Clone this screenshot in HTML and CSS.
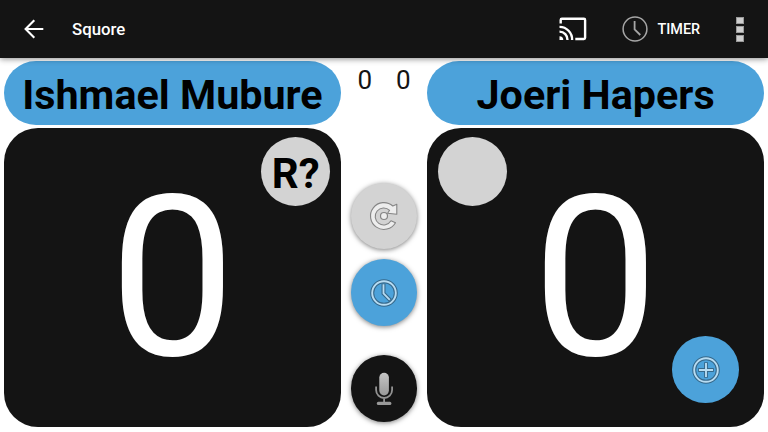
FILE: index.html
```html
<!DOCTYPE html>
<html lang="en">
<head>
<meta charset="utf-8">
<title>Squore</title>
<link rel="stylesheet" href="styles.css">
</head>
<body>
<header class="bar">
  <svg class="back" viewBox="0 0 20 20"><path d="M19.3 10H2M10.3 1.3L1.6 10l8.7 8.7" fill="none" stroke="#fff" stroke-width="2.1"/></svg>
  <h1 class="title">Squore</h1>
  <svg class="cast" viewBox="0 0 28 24" fill="none" stroke="#fff" stroke-width="2.4"><path d="M1.7 6.6V2.9q0-1.2 1.2-1.2h22q1.2 0 1.2 1.2v17.9q0 1.2-1.2 1.2h-8.6M.5 9.900A12.600 12.600 0 0 1 13.100 23M.5 14.600A8 8 0 0 1 8.500 23"/><path d="M.5 19.200A3.800 3.800 0 0 1 4.300 23H.5z" fill="#fff" stroke="none"/></svg>
  <svg class="clock" viewBox="0 0 26 26" fill="none" stroke="#a6a6a6"><circle cx="13" cy="13" r="11.900" stroke-width="1.500"/><path d="M12.600 5v8.300l5.700 5.700" stroke-width="1.800"/></svg>
  <span class="action">TIMER</span>
  <div class="more"><i></i><i></i><i></i></div>
</header>
<main class="board">
  <section class="side">
    <div class="name">Ishmael Mubure</div>
    <div class="score"><span class="digit">0</span><div class="serve right">R?</div></div>
  </section>
  <section class="middle">
    <div class="games"><span>0</span><span>0</span></div>
    <div class="fab gray">
      <svg viewBox="0 0 30 30" fill="none"><path d="M26.500 21.700A13.400 13.400 0 1 1 23.800 5L27.800 3.300V13.200L18.600 12.200L20.600 9.300A8.500 8.500 0 1 0 22 19.800Z" fill="#ededed" stroke="#858585" stroke-width="1.100" stroke-linejoin="round"/><circle cx="15" cy="15" r="3.500" fill="#ededed" stroke="#858585" stroke-width="1.200"/></svg>
    </div>
    <div class="fab blue time">
      <svg viewBox="0 0 30 30" fill="none"><circle cx="15" cy="15" r="11.800" stroke="#36688a" stroke-width="4"/><circle cx="15" cy="15" r="11.800" stroke="#b7dcf2" stroke-width="1.900"/><path d="M14.500 5.500v10l6.900 6.900" stroke="#36688a" stroke-width="4"/><path d="M14.500 6.300v9.200l6.300 6.300" stroke="#b7dcf2" stroke-width="1.800"/></svg>
    </div>
    <div class="fab black mic">
      <svg viewBox="0 0 30 36" fill="none"><defs><linearGradient id="m" x2="0" y2="1"><stop stop-color="#c6c6c6"/><stop offset="1" stop-color="#999"/></linearGradient></defs><rect x="10.300" y="1.800" width="9.600" height="22.600" rx="4.800" fill="url(#m)"/><path d="M7.100 15.500v3.500a8 8 0 0 0 16 0v-3.500M15.100 27v5" stroke="#929292" stroke-width="1.800"/><rect x="7.800" y="30.800" width="14.600" height="3.200" rx="1.500" fill="#999"/></svg>
    </div>
  </section>
  <section class="side">
    <div class="name">Joeri Hapers</div>
    <div class="score"><span class="digit">0</span><div class="serve left"></div>
      <div class="fab blue add">
        <svg viewBox="0 0 30 30" fill="none"><circle cx="15" cy="15" r="11.800" stroke="#36688a" stroke-width="4"/><circle cx="15" cy="15" r="11.800" stroke="#b7dcf2" stroke-width="1.900"/><path d="M15 7.200v15.600M7.200 15h15.600" stroke="#36688a" stroke-width="3.800"/><path d="M15 8v14M8 15h14" stroke="#b7dcf2" stroke-width="1.900"/></svg>
      </div>
    </div>
  </section>
</main>
</body>
</html>
```
FILE: styles.css
```css
* { box-sizing: border-box; }
body {
  margin: 0;
  width: 768px;
  height: 432px;
  overflow: hidden;
  background: #fff;
  font-family: Roboto, sans-serif;
  display: flex;
  flex-direction: column;
}
svg { display: block; flex: none; }
.bar {
  position: relative;
  z-index: 1;
  height: 57.5px;
  flex: none;
  display: flex;
  align-items: center;
  padding: 0 24px 0 24px;
  background: #141414;
  color: #fff;
  box-shadow: 0 1px 6px rgba(0, 0, 0, .45);
}
.back { width: 20px; height: 20px; }
.title {
  margin: 1px 0 0 28px;
  font-size: 16.800px;
  font-weight: 500;
  line-height: 20px;
}
.cast { width: 28px; height: 24px; margin-left: auto; }
.clock { width: 26px; height: 26px; margin-left: 35px; }
.action {
  width: 43.500px;
  margin: 2px 0 0 10px;
  font-size: 14.400px;
  font-weight: 500;
  line-height: 20px;
}
.more {
  width: 8px;
  margin: 1px 0 0 35px;
  display: flex;
  flex-direction: column;
  gap: 2px;
}
.more i { height: 7px; background: #cdcdcd; border: .5px solid #999; }
.board {
  flex: 1;
  display: grid;
  grid-template-columns: 337.500px 1fr 337.500px;
  padding: 3.700px 3.700px 4.700px;
}
.side { display: flex; flex-direction: column; gap: 3.500px; }
.name {
  height: 63.500px;
  border-radius: 32px;
  background: #4ca2da;
  color: #000;
  font-size: 41.300px;
  font-weight: 700;
  line-height: 68px;
  text-align: center;
  white-space: nowrap;
}
.score {
  position: relative;
  flex: 1;
  display: flex;
  align-items: center;
  justify-content: center;
  border-radius: 34px;
  background: #141414;
}
.digit {
  color: #fff;
  font-size: 225px;
  line-height: 264px;
}
.serve {
  position: absolute;
  top: 9px;
  width: 69px;
  height: 69px;
  border-radius: 50%;
  background: #d3d3d3;
  font-size: 42px;
  font-weight: 700;
  line-height: 74px;
  text-align: center;
}
.right { right: 11px; }
.left { left: 11px; }
.middle { display: flex; flex-direction: column; align-items: center; }
.games {
  height: 121.500px;
  display: flex;
  gap: 24px;
  font-size: 26px;
  line-height: 38px;
  color: #141414;
}
.fab {
  flex: none;
  width: 66.600px;
  height: 66.600px;
  border-radius: 50%;
  display: flex;
  align-items: center;
  justify-content: center;
  box-shadow: 0 1px 5px rgba(0, 0, 0, .5);
}
.fab svg { width: 30px; height: 30px; }
.gray { background: #d3d3d3; }
.blue { background: #4ca2da; }
.black { background: #141414; }
.time { margin-top: 10.200px; }
.mic { margin-top: 29.400px; }
.mic svg { height: 36px; }
.add { position: absolute; right: 25.500px; bottom: 24.300px; box-shadow: none; }
```
